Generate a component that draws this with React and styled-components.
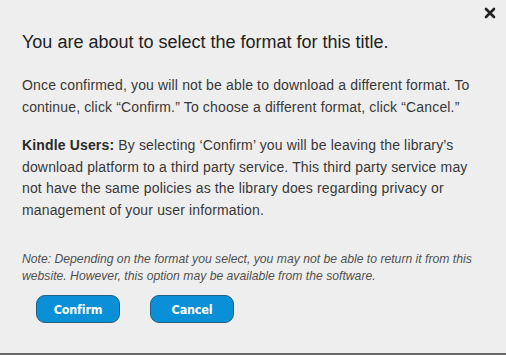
import React from 'react';
import styled, { createGlobalStyle } from 'styled-components';

const GlobalStyle = createGlobalStyle`
  html, body {
    margin: 0;
    padding: 0;
    background: #ffffff;
  }
`;

const Modal = styled.div`
  position: relative;
  box-sizing: border-box;
  width: 506px;
  height: 355px;
  background: #eeeeee;
  border-bottom: 2px solid #6a6a6a;
  padding: 31px 30px 0 22px;
  font-family: 'Liberation Sans', Arial, sans-serif;
  color: #333333;
`;

const Close = styled.button`
  position: absolute;
  top: 6px;
  right: 9px;
  width: 14px;
  height: 14px;
  padding: 0;
  border: 0;
  background: transparent;
  cursor: pointer;
`;

const Title = styled.h2`
  margin: 0;
  font-size: 18px;
  line-height: 22px;
  font-weight: normal;
  color: #222222;
`;

const Text = styled.p`
  margin: ${(p) => p.$top}px 0 0;
  font-size: 14px;
  line-height: 21.5px;
  letter-spacing: 0.15px;
  color: #383838;

  strong {
    color: #2a2a2a;
  }
`;

const Note = styled.p`
  margin: 30px 0 0;
  font-size: 12.2px;
  line-height: 17px;
  font-style: italic;
  color: #505050;
`;

const Actions = styled.div`
  display: flex;
  gap: 30px;
  margin: 10px 0 0 14px;
`;

const Button = styled.button`
  box-sizing: border-box;
  width: 84px;
  height: 28px;
  border: 1px solid #245e82;
  border-radius: 9px;
  background: #0a90d6;
  color: #ffffff;
  font-family: 'DejaVu Sans Condensed', 'DejaVu Sans', sans-serif;
  font-weight: bold;
  font-size: 12.5px;
  letter-spacing: -0.2px;
  cursor: pointer;
`;

const CloseIcon = () => (
  <svg width="14" height="14" viewBox="0 0 14 14">
    <path d="M3 3 L11 11 M11 3 L3 11" stroke="#222" strokeWidth="2.6" strokeLinecap="round" />
  </svg>
);

const App = () => (
  <>
    <GlobalStyle />
    <Modal>
      <Close aria-label="Close">
        <CloseIcon />
      </Close>
      <Title>You are about to select the format for this title.</Title>
      <Text $top={22}>
        Once confirmed, you will not be able to download a different format. To continue, click
        “Confirm.” To choose a different format, click “Cancel.”
      </Text>
      <Text $top={17}>
        <strong>Kindle Users:</strong> By selecting ‘Confirm’ you will be leaving the library’s
        download platform to a third party service. This third party service may not have the same
        policies as the library does regarding privacy or management of your user information.
      </Text>
      <Note>
        Note: Depending on the format you select, you may not be able to return it from this
        website. However, this option may be available from the software.
      </Note>
      <Actions>
        <Button>Confirm</Button>
        <Button>Cancel</Button>
      </Actions>
    </Modal>
  </>
);

export default App;
